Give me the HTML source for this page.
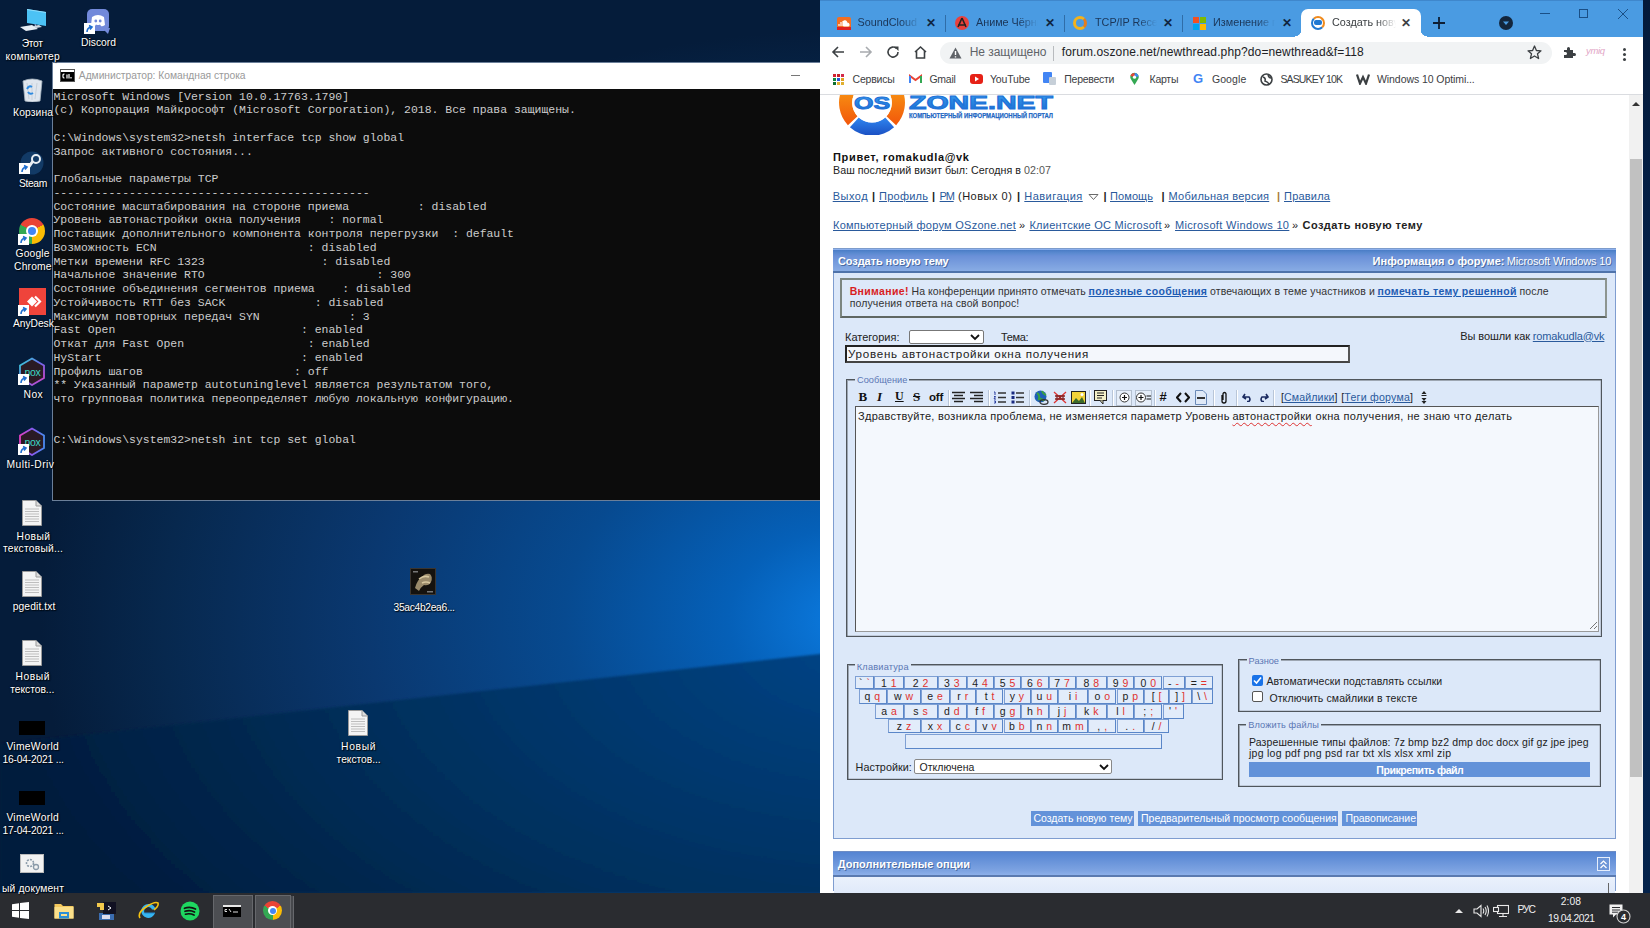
<!DOCTYPE html>
<html><head><meta charset="utf-8">
<style>
*{margin:0;padding:0;box-sizing:border-box}
html,body{width:1650px;height:928px;overflow:hidden;font-family:"Liberation Sans",sans-serif}
body{position:relative;background:#0a2a55}
.abs{position:absolute}
#desk{position:absolute;left:0;top:0;width:1650px;height:893px;overflow:hidden;
background:
 radial-gradient(ellipse 380px 260px at 820px 560px, rgba(40,130,220,.55), rgba(40,130,220,0) 70%),
 radial-gradient(ellipse 700px 420px at 760px 420px, rgba(20,90,170,.5), rgba(20,90,170,0) 75%),
 linear-gradient(180deg,#08244a 0%,#0a2b58 40%,#0a2a55 70%,#07203f 100%);}
#beamlow{position:absolute;left:0;top:0;width:1650px;height:893px;
 background:linear-gradient(174deg, rgba(0,0,0,0) 0%, rgba(0,0,0,0) 76%, rgba(3,20,45,.45) 78%, rgba(3,20,45,.55) 100%);}
.ico{position:absolute;color:#fff;font-size:11px;text-align:center;line-height:13px;text-shadow:0 0 2px #000,1px 1px 1px #000;width:70px}
/* taskbar */
#task{position:absolute;left:0;top:893px;width:1650px;height:35px;background:#2a2c30}
/* cmd */
#cmd{position:absolute;left:52px;top:62px;width:768px;height:439px;background:#0c0c0c;border:1px solid #6b7f99;border-right:none}
#cmdt{position:absolute;left:0;top:0;width:767px;height:26px;background:#fff}
#cmdtxt{position:absolute;left:0.5px;top:26px;font-family:"Liberation Mono",monospace;font-size:11.46px;line-height:13.75px;color:#cccccc;white-space:pre;padding-top:0.5px}
/* chrome */
#chr{position:absolute;left:820px;top:0;width:823px;height:893px;background:#fff;overflow:hidden}
#tabs{position:absolute;left:0;top:0;width:823px;height:37px;background:#4a9be2;border-top:1px solid #3f87cc}
#toolbar{position:absolute;left:0;top:37px;width:823px;height:30px;background:#fff}
#bm{position:absolute;left:0;top:67px;width:823px;height:28px;background:#fff;border-bottom:1px solid #dadce0}
#page{position:absolute;left:0;top:95px;width:809px;height:798px;background:#fff;overflow:hidden;font-family:"Liberation Sans",sans-serif;font-size:11px;color:#000}
#sb{position:absolute;left:809px;top:95px;width:14px;height:798px;background:#f1f1f1}
.tsep{position:absolute;top:14px;width:1px;height:17px;background:#2f6da8}
.ttl{position:absolute;top:15px;font-size:11.5px;line-height:14px;color:#1b3658;white-space:nowrap;width:62px;overflow:hidden;-webkit-mask-image:linear-gradient(90deg,#000 75%,transparent 100%)}
.tx{position:absolute;top:15px;font-size:12px;line-height:14px;color:#0f2540;font-weight:bold}
.bmt{position:absolute;top:5px;font-size:11.3px;line-height:14px;color:#3c4043;white-space:nowrap}
.t{position:absolute;font-size:11px;line-height:13px;white-space:nowrap}
#page a{color:#2a5a9c;text-decoration:underline}
.p{font-weight:normal;color:#222}
.fs{position:absolute;border:1px solid #50565c;box-shadow:inset 1px 1px 0 rgba(80,86,92,.45),inset -1px -1px 0 rgba(80,86,92,.2)}
.lg{position:absolute;background:#dfeafa;padding:0 2px;font-size:9.2px;line-height:12px;color:#6580b8;letter-spacing:0.15px}
.btn{position:absolute;top:715.5px;height:15.5px;background:#6392d9;color:#fff;font-size:10.4px;line-height:15px;text-align:center;white-space:nowrap;letter-spacing:0.1px}
.key{position:absolute;background:#e2ecfa;border:1px solid #5a86c8;border-top-color:#7fa0d4;border-left-color:#7fa0d4;font-size:10.5px;line-height:13px;text-align:center;color:#222;white-space:nowrap;letter-spacing:0.5px}
.dl{position:absolute;width:90px;text-align:center;color:#fff;font-size:10.3px;line-height:13px;text-shadow:0 0 2px rgba(0,0,0,.9),1px 1px 1px rgba(0,0,0,.8);white-space:nowrap}
</style></head>
<body>
<div id="desk"><svg class="abs" style="left:0;top:0" width="1650" height="893">
 <defs>
  <radialGradient id="up" gradientUnits="userSpaceOnUse" cx="860" cy="620" r="820" gradientTransform="translate(860 620) scale(1 0.72) translate(-860 -620)">
   <stop offset="0" stop-color="#1088ec"/><stop offset="0.05" stop-color="#0a74d6"/><stop offset="0.16" stop-color="#0560b8"/><stop offset="0.36" stop-color="#074a90"/><stop offset="0.6" stop-color="#0a3870"/><stop offset="0.85" stop-color="#07284e"/><stop offset="1" stop-color="#051c3a"/>
  </radialGradient>
  <radialGradient id="lo" gradientUnits="userSpaceOnUse" cx="880" cy="640" r="900" gradientTransform="translate(880 640) scale(1 0.55) translate(-880 -640)">
   <stop offset="0" stop-color="#05468a"/><stop offset="0.2" stop-color="#043d78"/><stop offset="0.45" stop-color="#043466"/><stop offset="0.7" stop-color="#042a52"/><stop offset="1" stop-color="#031b3c"/>
  </radialGradient>
  <filter id="bl"><feGaussianBlur stdDeviation="1.2"/></filter>
 </defs>
 <rect width="1650" height="893" fill="url(#up)"/>
 <polygon points="0,744 1650,563 1650,893 0,893" fill="url(#lo)" filter="url(#bl)"/>
</svg><div class="abs" style="left:-8px;top:8px;width:80px;height:30px"><svg style="position:absolute;left:27px;top:0" width="30" height="26"><path d="M8 1 L27 4 V18 L8 15 Z" fill="#4cc2f5"/><path d="M8 1 L27 4 V5 L8 2Z" fill="#8fdcfb"/><path d="M16 16 L17 19 L14 20" stroke="#9ad" fill="none"/><path d="M1 19 L13 17 L19 21 L7 23 Z" fill="#e8eef5"/><path d="M14 18 L20 17 L23 19 L17 20Z" fill="#d0dae4"/></svg></div><div class="abs" style="left:57px;top:8px;width:80px;height:30px"><div style="position:absolute;left:30px;top:1px;width:22px;height:22px;background:#7289da;border-radius:5px"></div><svg style="position:absolute;left:33px;top:6px" width="16" height="14"><path d="M2 3 Q8 -1 14 3 L15 11 Q12 13 11 12 L10 10.5 Q8 11.5 6 10.5 L5 12 Q2 13 1 11 Z" fill="#fff"/><circle cx="5.8" cy="7" r="1.4" fill="#7289da"/><circle cx="10.2" cy="7" r="1.4" fill="#7289da"/></svg><svg style="position:absolute;left:45px;top:20px" width="8" height="6"><path d="M0 0H8L6 6Z" fill="#7289da"/></svg><div style="position:absolute;left:27px;top:15px;width:11px;height:11px"><svg width="11" height="11" style="position:absolute;left:0;bottom:0"><rect x="0" y="0" width="11" height="11" fill="#fff"/><path d="M3 9 Q3 5 7 4 M5 2.5 L8 4 L6 6.5" stroke="#1f6fd0" stroke-width="1.6" fill="none"/></svg></div></div><div class="abs" style="left:-8px;top:78px;width:80px;height:30px"><svg style="position:absolute;left:29px;top:0" width="23" height="24"><path d="M2 3 Q11 -1 21 3 L19 23 Q11 25 4 23 Z" fill="#dfe6ee" stroke="#aab6c2" stroke-width="0.8"/><path d="M6 5 L8 21 M11 5 V22 M16 5 L14 21" stroke="#c0cad4" stroke-width="0.8"/><path d="M6 11 Q8 7 11 9 M12 15 Q9 17 7 14" stroke="#2d8ae0" stroke-width="2" fill="none"/></svg></div><div class="abs" style="left:-8px;top:150px;width:80px;height:30px"><svg style="position:absolute;left:27px;top:1px" width="26" height="24"><circle cx="13" cy="12" r="11.5" fill="#123a66"/><circle cx="17" cy="8" r="4" fill="none" stroke="#e8eef4" stroke-width="2"/><path d="M1 14 L9 17 L14 10" stroke="#e8eef4" stroke-width="3" fill="none"/></svg><div style="position:absolute;left:27px;top:13px;width:11px;height:11px"><svg width="11" height="11" style="position:absolute;left:0;bottom:0"><rect x="0" y="0" width="11" height="11" fill="#fff"/><path d="M3 9 Q3 5 7 4 M5 2.5 L8 4 L6 6.5" stroke="#1f6fd0" stroke-width="1.6" fill="none"/></svg></div></div><div class="abs" style="left:-8px;top:218px;width:80px;height:30px"><div style="position:absolute;left:27px;top:0;width:26px;height:26px;border-radius:50%;background:conic-gradient(from -60deg,#ea4335 0deg 120deg,#fbbc04 120deg 240deg,#34a853 240deg 360deg)"></div><div style="position:absolute;left:34px;top:7px;width:12px;height:12px;border-radius:50%;background:#fff"></div><div style="position:absolute;left:36px;top:9px;width:8px;height:8px;border-radius:50%;background:#4285f4"></div><div style="position:absolute;left:26px;top:16px;width:11px;height:11px"><svg width="11" height="11" style="position:absolute;left:0;bottom:0"><rect x="0" y="0" width="11" height="11" fill="#fff"/><path d="M3 9 Q3 5 7 4 M5 2.5 L8 4 L6 6.5" stroke="#1f6fd0" stroke-width="1.6" fill="none"/></svg></div></div><div class="abs" style="left:-8px;top:288px;width:80px;height:30px"><div style="position:absolute;left:27px;top:0;width:27px;height:27px;background:#ef443b"></div><svg style="position:absolute;left:31px;top:5px" width="20" height="17"><path d="M4 8.5 L9 3.5 L14 8.5 L9 13.5Z" fill="#fff"/><path d="M12 3.5 L17 8.5 L12 13.5" stroke="#fff" stroke-width="2.2" fill="none"/></svg><div style="position:absolute;left:26px;top:17px;width:11px;height:11px"><svg width="11" height="11" style="position:absolute;left:0;bottom:0"><rect x="0" y="0" width="11" height="11" fill="#fff"/><path d="M3 9 Q3 5 7 4 M5 2.5 L8 4 L6 6.5" stroke="#1f6fd0" stroke-width="1.6" fill="none"/></svg></div></div><div class="abs" style="left:-8px;top:357px;width:80px;height:30px"><svg style="position:absolute;left:26px;top:0" width="28" height="29"><defs><linearGradient id="nx1" x1="0" y1="0" x2="1" y2="1"><stop offset="0" stop-color="#30d8d0"/><stop offset="0.5" stop-color="#6a6af0"/><stop offset="1" stop-color="#e040c0"/></linearGradient></defs><path d="M14 1.5 L26 8.5 V21 L14 28 L2 21 V8.5 Z" fill="#2a1a24" stroke="url(#nx1)" stroke-width="1.8"/><text x="14.5" y="18.5" font-family="Liberation Sans" font-size="10.5" fill="#3ad8c4" text-anchor="middle" letter-spacing="-0.3">nox</text></svg><div style="position:absolute;left:26px;top:17px;width:11px;height:11px"><svg width="11" height="11" style="position:absolute;left:0;bottom:0"><rect x="0" y="0" width="11" height="11" fill="#fff"/><path d="M3 9 Q3 5 7 4 M5 2.5 L8 4 L6 6.5" stroke="#1f6fd0" stroke-width="1.6" fill="none"/></svg></div></div><div class="abs" style="left:-8px;top:427px;width:80px;height:30px"><svg style="position:absolute;left:26px;top:0" width="28" height="29"><defs><linearGradient id="nx2" x1="0" y1="0" x2="1" y2="0"><stop offset="0" stop-color="#e040c0"/><stop offset="0.5" stop-color="#8a5af0"/><stop offset="1" stop-color="#4a8af0"/></linearGradient></defs><path d="M14 1.5 L26 8.5 V21 L14 28 L2 21 V8.5 Z" fill="#2a1a24" stroke="url(#nx2)" stroke-width="1.8"/><text x="14.5" y="18.5" font-family="Liberation Sans" font-size="10.5" fill="#3ad8c4" text-anchor="middle" letter-spacing="-0.3">nox</text></svg><div style="position:absolute;left:26px;top:17px;width:11px;height:11px"><svg width="11" height="11" style="position:absolute;left:0;bottom:0"><rect x="0" y="0" width="11" height="11" fill="#fff"/><path d="M3 9 Q3 5 7 4 M5 2.5 L8 4 L6 6.5" stroke="#1f6fd0" stroke-width="1.6" fill="none"/></svg></div></div><div class="abs" style="left:-8px;top:500px;width:80px;height:30px"><div style="position:absolute;left:30px;top:0"><svg width="20" height="26" viewBox="0 0 20 26"><path d="M0.5 0.5H14L19.5 6V25.5H0.5Z" fill="#f4f4f4" stroke="#9a9a9a"/><path d="M14 0.5V6H19.5" fill="#dcdcdc" stroke="#9a9a9a"/><path d="M3 9H17M3 11.5H17M3 14H17M3 16.5H17M3 19H17M3 21.5H17" stroke="#b8b8b8" stroke-width="0.9"/></svg></div></div><div class="abs" style="left:-8px;top:571px;width:80px;height:30px"><div style="position:absolute;left:30px;top:0"><svg width="20" height="26" viewBox="0 0 20 26"><path d="M0.5 0.5H14L19.5 6V25.5H0.5Z" fill="#f4f4f4" stroke="#9a9a9a"/><path d="M14 0.5V6H19.5" fill="#dcdcdc" stroke="#9a9a9a"/><path d="M3 9H17M3 11.5H17M3 14H17M3 16.5H17M3 19H17M3 21.5H17" stroke="#b8b8b8" stroke-width="0.9"/></svg></div></div><div class="abs" style="left:-8px;top:640px;width:80px;height:30px"><div style="position:absolute;left:30px;top:0"><svg width="20" height="26" viewBox="0 0 20 26"><path d="M0.5 0.5H14L19.5 6V25.5H0.5Z" fill="#f4f4f4" stroke="#9a9a9a"/><path d="M14 0.5V6H19.5" fill="#dcdcdc" stroke="#9a9a9a"/><path d="M3 9H17M3 11.5H17M3 14H17M3 16.5H17M3 19H17M3 21.5H17" stroke="#b8b8b8" stroke-width="0.9"/></svg></div></div><div class="abs" style="left:-8px;top:720px;width:80px;height:30px"><div style="position:absolute;left:27px;top:1px;width:26px;height:14px;background:#000"></div></div><div class="abs" style="left:-8px;top:790px;width:80px;height:30px"><div style="position:absolute;left:27px;top:1px;width:26px;height:14px;background:#000"></div></div><div class="abs" style="left:-8px;top:854px;width:80px;height:30px"><div style="position:absolute;left:28px;top:0;width:24px;height:19px;background:#f2f2f2;border:1px solid #bbb"></div><svg style="position:absolute;left:31px;top:3px" width="18" height="14"><circle cx="7" cy="6" r="3.5" fill="none" stroke="#8a9aa8" stroke-width="1.6" stroke-dasharray="2 1.2"/><circle cx="13" cy="10" r="2.5" fill="none" stroke="#8a9aa8" stroke-width="1.3"/></svg></div><div class="abs" style="left:383px;top:568px;width:80px;height:30px"><div style="position:absolute;left:27px;top:0;width:26px;height:27px;background:#15120e;border:1px solid #3a3530"></div><svg style="position:absolute;left:27px;top:0" width="26" height="27"><path d="M5 20 Q7 12 12 9 Q15 5 20 6 Q23 9 21 14 Q19 18 14 17 Q11 19 9 23 Z" fill="#9a8a6a"/><path d="M9 11 Q14 7 19 9 M12 15 Q16 13 20 15" stroke="#d8c8a0" stroke-width="1.6" fill="none"/><rect x="3" y="3" width="5" height="1.5" fill="#777"/><rect x="17" y="23" width="6" height="1.5" fill="#777"/></svg></div><div class="abs" style="left:318px;top:710px;width:80px;height:30px"><div style="position:absolute;left:30px;top:0"><svg width="20" height="26" viewBox="0 0 20 26"><path d="M0.5 0.5H14L19.5 6V25.5H0.5Z" fill="#f4f4f4" stroke="#9a9a9a"/><path d="M14 0.5V6H19.5" fill="#dcdcdc" stroke="#9a9a9a"/><path d="M3 9H17M3 11.5H17M3 14H17M3 16.5H17M3 19H17M3 21.5H17" stroke="#b8b8b8" stroke-width="0.9"/></svg></div></div></div>
<div class="abs" style="left:1643px;top:0;width:7px;height:893px;background:linear-gradient(#041a3a,#05244e 40%,#062a5a 60%,#04224a)"></div>
<div id="cmd">
 <div id="cmdt"><div class="abs" style="left:8px;top:7px;width:13px;height:11px;background:#000;border-top:2px solid #fff;box-shadow:0 0 0 1px #555"><svg width="13" height="9" style="position:absolute;left:0;top:0"><path d="M2 3 Q2 2 3.5 2 M2 3 V5 Q2 6 3.5 6 M6 6.5 V2.5 M8 2 V6.5 M10 5 V6.5" stroke="#fff" stroke-width="1.2" fill="none"/></svg></div><div class="abs" style="left:738px;top:12px;width:9px;height:1px;background:#777"></div></div>
 <div id="cmdtxt">Microsoft Windows [Version 10.0.17763.1790]
(c) Корпорация Майкрософт (Microsoft Corporation), 2018. Все права защищены.

C:\Windows\system32&gt;netsh interface tcp show global
Запрос активного состояния...

Глобальные параметры TCP
----------------------------------------------
Состояние масштабирования на стороне приема          : disabled
Уровень автонастройки окна получения    : normal
Поставщик дополнительного компонента контроля перегрузки  : default
Возможность ECN                      : disabled
Метки времени RFC 1323                 : disabled
Начальное значение RTO                         : 300
Состояние объединения сегментов приема    : disabled
Устойчивость RTT без SACK             : disabled
Максимум повторных передач SYN             : 3
Fast Open                           : enabled
Откат для Fast Open                  : enabled
HyStart                             : enabled
Профиль шагов                      : off
** Указанный параметр autotuninglevel является результатом того,
что групповая политика переопределяет любую локальную конфигурацию.


C:\Windows\system32&gt;netsh int tcp set global</div>
</div>
<div id="chr">
 <div id="tabs">
  <div class="tsep" style="left:125px"></div>
  <div class="tsep" style="left:244px"></div>
  <div class="tsep" style="left:362px"></div>
  <div class="abs" style="left:17px;top:16px;width:14px;height:13px;background:#f26f23;border-radius:2px"><svg width="14" height="13" style="position:absolute;left:0;top:0"><path d="M2 9 L2 7 M4 9 L4 5 M6 9 L6 4 M7 9 L7 4 Q9 3 10 6 Q12 6 12 8 Q12 9 11 9 Z" stroke="#fff" stroke-width="1.2" fill="#fff"/><rect x="0" y="10" width="14" height="3" fill="#e0201f"/></svg></div>
  <div class="tx" style="left:106px">✕</div>
  <div class="abs" style="left:135px;top:15px;width:14px;height:14px;border-radius:50%;background:#e8413d"><svg width="14" height="14" style="position:absolute;left:0;top:0"><path d="M7 2 L11 11 M7 2 L3 11 M3 9 L11 9" stroke="#222" stroke-width="1.6" fill="none"/></svg></div>
  <div class="tx" style="left:225px">✕</div>
  <div class="abs" style="left:253px;top:15px;width:14px;height:14px;border-radius:50%;border:3px solid #f3b21c;border-right-color:#e57d1c"></div>
  <div class="tx" style="left:343px">✕</div>
  <div class="abs" style="left:373px;top:16px;width:6px;height:6px;background:#f25022"></div>
  <div class="abs" style="left:380px;top:16px;width:6px;height:6px;background:#7fba00"></div>
  <div class="abs" style="left:373px;top:23px;width:6px;height:6px;background:#00a4ef"></div>
  <div class="abs" style="left:380px;top:23px;width:6px;height:6px;background:#ffb900"></div>
  <div class="tx" style="left:462px">✕</div>
  <div class="abs" style="left:481px;top:8px;width:120px;height:29px;background:#fff;border-radius:7px 7px 0 0"></div>
  <div class="abs" style="left:475px;top:29px;width:6px;height:8px;background:radial-gradient(circle at 0 0,#4a9be2 6px,#fff 6.5px)"></div>
  <div class="abs" style="left:601px;top:29px;width:6px;height:8px;background:radial-gradient(circle at 100% 0,#4a9be2 6px,#fff 6.5px)"></div>
  <div class="abs" style="left:491px;top:15px;width:14px;height:14px;border-radius:50%;border:2.5px solid #f08a1c;border-bottom-color:#1e78d2;border-left-color:#1e78d2;background:#fff"></div>
  <div class="abs" style="left:494px;top:19px;width:8px;height:5px;border-radius:2px;background:#1e78d2"></div>
  <div class="tx" style="left:581px;color:#3c4043">✕</div>
  <svg class="abs" style="left:612px;top:15px" width="14" height="14"><path d="M7 1 V13 M1 7 H13" stroke="#0e1e33" stroke-width="1.8"/></svg>
  <div class="abs" style="left:679px;top:15px;width:14px;height:14px;border-radius:50%;background:#13263d"><svg width="14" height="14" style="position:absolute;left:0;top:0"><path d="M4 5.5 L7 9 L10 5.5 Z" fill="#4a9be2"/></svg></div>
  <div class="abs" style="left:720px;top:12px;width:10px;height:1px;background:#1a4f86"></div>
  <div class="abs" style="left:759px;top:8px;width:9px;height:9px;border:1px solid #1a4f86"></div>
  <svg class="abs" style="left:797px;top:7px" width="12" height="12"><path d="M1 1 L11 11 M11 1 L1 11" stroke="#1a4f86" stroke-width="1"/></svg>
 </div>
 <div id="toolbar">
  <svg class="abs" style="left:11px;top:8px" width="14" height="14"><path d="M13 7 H2 M7 2 L2 7 L7 12" stroke="#3c4043" stroke-width="1.6" fill="none"/></svg>
  <svg class="abs" style="left:39px;top:8px" width="14" height="14"><path d="M1 7 H12 M7 2 L12 7 L7 12" stroke="#a8abaf" stroke-width="1.6" fill="none"/></svg>
  <svg class="abs" style="left:66px;top:8px" width="14" height="14"><path d="M12 7 A5 5 0 1 1 10.5 3.5" stroke="#3c4043" stroke-width="1.6" fill="none"/><path d="M8 1.5 L12.5 1.5 L12.5 6 Z" fill="#3c4043"/></svg>
  <svg class="abs" style="left:93px;top:8px" width="15" height="14"><path d="M2 7 L7.5 2 L13 7 M3.5 6 V13 H11.5 V6" stroke="#3c4043" stroke-width="1.6" fill="none"/></svg>
  <div class="abs" style="left:120px;top:5px;width:612px;height:22px;border-radius:11px;background:#f1f3f4"></div>
  <svg class="abs" style="left:129px;top:10px" width="13" height="12"><path d="M6.5 0.5 L12.5 11.5 H0.5 Z" fill="#5f6368"/><path d="M6.5 4 V8 M6.5 9.2 V10.4" stroke="#fff" stroke-width="1.4"/></svg>
  
  <div class="abs" style="left:233px;top:9px;width:1px;height:15px;background:#b8bbbe"></div>
  
  <svg class="abs" style="left:707px;top:8px" width="15" height="15"><path d="M7.5 1 L9.4 5.5 L14 5.8 L10.5 8.8 L11.6 13.5 L7.5 11 L3.4 13.5 L4.5 8.8 L1 5.8 L5.6 5.5 Z" stroke="#3c4043" stroke-width="1.3" fill="none" stroke-linejoin="round"/></svg>
  <svg class="abs" style="left:742px;top:8px" width="14" height="14"><path d="M2 5 H5 V3.5 A1.5 1.5 0 0 1 8 3.5 V5 H11 V8 H12.5 A1.5 1.5 0 0 1 12.5 11 H11 V13 H2 V10 H3.5 A1.5 1.5 0 0 0 3.5 7 H2 Z" fill="#3c4043"/></svg>
  <div class="abs" style="left:766px;top:8px;font:italic 9.5px/12px 'Liberation Sans',sans-serif;color:#e2a6c6;letter-spacing:-0.3px">ymiq</div>
  <div class="abs" style="left:803px;top:11px;width:3px;height:3px;border-radius:50%;background:#3c4043;box-shadow:0 5px 0 #3c4043,0 10px 0 #3c4043"></div>
 </div>
 <div id="bm">
  <div class="abs" style="left:13px;top:6.5px;width:3px;height:3px;background:#d3232f"></div><div class="abs" style="left:17px;top:6.5px;width:3px;height:3px;background:#c8202a"></div><div class="abs" style="left:21px;top:6.5px;width:3px;height:3px;background:#d32a4a"></div><div class="abs" style="left:13px;top:10.5px;width:3px;height:3px;background:#0f8a3c"></div><div class="abs" style="left:17px;top:10.5px;width:3px;height:3px;background:#2456d6"></div><div class="abs" style="left:21px;top:10.5px;width:3px;height:3px;background:#e0a020"></div><div class="abs" style="left:13px;top:14.5px;width:3px;height:3px;background:#0d6e30"></div><div class="abs" style="left:17px;top:14.5px;width:3px;height:3px;background:#e0b030"></div><div class="abs" style="left:21px;top:14.5px;width:3px;height:3px;background:#e0b030"></div>
  
  <svg class="abs" style="left:89px;top:7px" width="13" height="10"><path d="M1 9 V2 L6.5 6 L12 2 V9" stroke="#ea4335" stroke-width="2" fill="none"/><path d="M1 9 V2" stroke="#4285f4" stroke-width="2"/><path d="M12 9 V2" stroke="#34a853" stroke-width="2"/></svg>
  
  <div class="abs" style="left:150px;top:7px;width:13px;height:10px;background:#e62117;border-radius:3px"><svg width="13" height="10" style="position:absolute;left:0;top:0"><path d="M5 2.5 L9 5 L5 7.5 Z" fill="#fff"/></svg></div>
  
  <div class="abs" style="left:223px;top:5px;width:9px;height:11px;background:#4285f4;border-radius:1px"></div>
  <div class="abs" style="left:229px;top:10px;width:7px;height:8px;background:#c6cfd8;border-radius:1px"></div>
  
  <svg class="abs" style="left:309px;top:5px" width="11" height="14"><path d="M5.5 13 L1.8 7 A4.2 4.2 0 1 1 9.2 7 Z" fill="#34a853"/><path d="M5.5 1 A4.2 4.2 0 0 1 9.5 4.5 L5.5 5 Z" fill="#4285f4"/><path d="M1.5 4 A4.2 4.2 0 0 1 5.5 1 L5.5 5 Z" fill="#ea4335"/><circle cx="5.5" cy="5.2" r="1.6" fill="#fff"/></svg>
  
  <div class="abs" style="left:373px;top:5px;font-size:13px;font-weight:bold;color:#4285f4;line-height:14px">G</div>
  
  <svg class="abs" style="left:440px;top:6px" width="13" height="13"><circle cx="6.5" cy="6.5" r="5.5" fill="none" stroke="#3c4043" stroke-width="1.6"/><path d="M3 4 Q6 5 5 8 Q8 9 9 11 M8 2 Q9 5 11 5" stroke="#3c4043" stroke-width="1.5" fill="none"/></svg>
  
  <svg class="abs" style="left:536px;top:6px" width="14" height="12"><path d="M1 1.5 L4 10.5 L7 4 L10 10.5 L13 1.5" stroke="#3c4043" stroke-width="2.2" fill="none"/></svg>
  
 </div>
 <div id="page">
  <!-- logo -->
  <svg class="abs" style="left:12px;top:-5px" width="250" height="45">
   <defs>
    <linearGradient id="og" x1="0" y1="0" x2="0" y2="1"><stop offset="0" stop-color="#f9a814"/><stop offset="0.45" stop-color="#f78a12"/><stop offset="1" stop-color="#f2560a"/></linearGradient>
    <linearGradient id="bg" x1="0" y1="0" x2="0" y2="1"><stop offset="0" stop-color="#2f86f0"/><stop offset="1" stop-color="#1a4fc2"/></linearGradient>
    <linearGradient id="tg" x1="0" y1="0" x2="0" y2="1"><stop offset="0" stop-color="#3aa0f0"/><stop offset="1" stop-color="#1a6ad0"/></linearGradient>
   </defs>
   <path d="M15.9 35.2 A33 33 0 0 1 40 -20.3 L40 -7.1 A19.8 19.8 0 0 0 25.5 26.2 Z" fill="url(#og)"/>
   <path d="M64.1 35.2 A33 33 0 0 0 40 -20.3 L40 -7.1 A19.8 19.8 0 0 1 54.5 26.2 Z" fill="url(#og)"/>
   <path d="M17.9 37.2 A33 33 0 0 0 62.1 37.2 L53.2 27.4 A19.8 19.8 0 0 1 26.8 27.4 Z" fill="url(#bg)"/>
   <circle cx="40" cy="12.7" r="19.8" fill="#fff"/>
   <text x="22" y="18.5" font-family="Liberation Sans" font-weight="bold" font-size="17" textLength="36" lengthAdjust="spacingAndGlyphs" fill="url(#tg)" stroke="#1e6fd6" stroke-width="0.9">OS</text>
   <text x="77" y="18.7" font-family="Liberation Sans" font-weight="bold" font-size="19" textLength="144" lengthAdjust="spacingAndGlyphs" fill="url(#tg)" stroke="#1e72d8" stroke-width="1">ZONE.NET</text>
   <text x="77" y="28.2" font-family="Liberation Sans" font-weight="bold" font-size="6.8" textLength="144" lengthAdjust="spacingAndGlyphs" fill="#2468c4" stroke="#2468c4" stroke-width="0.25">КОМПЬЮТЕРНЫЙ ИНФОРМАЦИОННЫЙ ПОРТАЛ</text>
  </svg>
  <!-- greeting -->
  <!-- nav -->
  <!-- breadcrumb -->
  <!-- table -->
  <div class="abs" style="left:13px;top:153px;width:783px;height:591px;background:#dce8f9;border:1px solid #7f9dd0"></div>
  <div class="abs" style="left:13px;top:153px;width:783px;height:25px;background:linear-gradient(#7d9ccc 0,#7d9ccc 1px,#8cb0ee 1px,#8cb0ee 2px,#4a7cc6 2px,#5a8ad0 5px,#6a90d8 8px,#88acE4 23px,#4f73aa 23px,#4f73aa 24px)"></div>
  <!-- alert -->
  <div class="abs" style="left:20px;top:183px;width:767px;height:40px;border:2px solid #7c8680;border-right-color:#8d9590;border-bottom-color:#5f6763;background:#dde9f9"></div>
  <!-- category row -->
  <div class="abs" style="left:89px;top:235px;width:75px;height:14px;background:#fff;border:1px solid #777;border-radius:2px"><svg width="10" height="7" style="position:absolute;left:60px;top:3px"><path d="M1 1 L5 5 L9 1" stroke="#111" stroke-width="1.8" fill="none"/></svg></div>
  <div class="abs" style="left:25px;top:250px;width:505px;height:18px;background:#f4f7fc;border:2px solid #222;border-right-color:#555;border-bottom-color:#444"></div>
  <!-- message fieldset -->
  <div class="fs" style="left:26px;top:284px;width:756px;height:258px"></div>
  <div id="tb" class="abs" style="left:35px;top:292px;width:600px;height:18px"><div class="abs" style="left:3.5px;top:3px;font-family:'Liberation Serif',serif;font-weight:bold;font-size:13px;line-height:14px;color:#111">B</div><div class="abs" style="left:22px;top:3px;font-family:'Liberation Serif',serif;font-weight:bold;font-style:italic;font-size:13px;line-height:14px;color:#111">I</div><div class="abs" style="left:40px;top:3px;font-family:'Liberation Serif',serif;font-weight:bold;font-size:12px;line-height:13px;color:#111;text-decoration:underline">U</div><div class="abs" style="left:58px;top:3px;font-family:'Liberation Serif',serif;font-weight:bold;font-size:13px;line-height:14px;color:#111;text-decoration:line-through">S</div><div class="abs" style="left:74px;top:4px;font-weight:bold;font-size:11.5px;line-height:13px;color:#111;letter-spacing:-0.2px">off</div><div class="abs" style="left:92.5px;top:3px;width:1px;height:16px;background:#b9c6d8;box-shadow:1px 0 0 #fff"></div><svg class="abs" style="left:97px;top:4px" width="13" height="12"><path d="M0 1.5H13M2 4.5H11M0 7.5H13M2 10.5H11" stroke="#222" stroke-width="1.6"/></svg><svg class="abs" style="left:115px;top:4px" width="13" height="12"><path d="M0 1.5H13M4 4.5H13M0 7.5H13M4 10.5H13" stroke="#222" stroke-width="1.6"/></svg><div class="abs" style="left:133px;top:3px;width:1px;height:16px;background:#b9c6d8;box-shadow:1px 0 0 #fff"></div><svg class="abs" style="left:138px;top:4px" width="13" height="13"><path d="M5 2H13M5 6.5H13M5 11H13" stroke="#333" stroke-width="1.4"/><path d="M1 1L2 1V4M1 5.5H2.5L1 8H3M1 10H2.5V12H1" stroke="#2a3fa0" stroke-width="1" fill="none"/></svg><svg class="abs" style="left:156px;top:4px" width="13" height="13"><path d="M5 2H13M5 6.5H13M5 11H13" stroke="#333" stroke-width="1.4"/><rect x="0.5" y="0.5" width="3" height="3" fill="#1a2a80"/><rect x="0.5" y="5" width="3" height="3" fill="#1a2a80"/><rect x="0.5" y="9.5" width="3" height="3" fill="#1a2a80"/></svg><div class="abs" style="left:174px;top:3px;width:1px;height:16px;background:#b9c6d8;box-shadow:1px 0 0 #fff"></div><svg class="abs" style="left:179px;top:3px" width="15" height="15"><circle cx="6.5" cy="6.5" r="6" fill="#1f5fb8"/><path d="M3 3Q6 5 5 9Q8 8 10 11M8 1Q9 4 12 5" stroke="#3aa040" stroke-width="2" fill="none"/><ellipse cx="10" cy="12" rx="4" ry="2.3" fill="none" stroke="#333" stroke-width="1.3"/></svg><svg class="abs" style="left:198px;top:4px" width="14" height="13"><path d="M1 1L13 12M13 1L1 12" stroke="#d33" stroke-width="1.3"/><path d="M2 5H12M2 8H12M4 4V9M7 4V9M10 4V9" stroke="#822" stroke-width="1.3"/></svg><svg class="abs" style="left:216px;top:4px" width="15" height="13"><rect x="0.5" y="0.5" width="14" height="12" fill="#f2d23a" stroke="#222"/><path d="M1 12L5 7L8 10L11 6L14 12Z" fill="#3b6a2a"/><circle cx="11" cy="3.5" r="1.5" fill="#fff"/></svg><div class="abs" style="left:234px;top:3px;width:1px;height:16px;background:#b9c6d8;box-shadow:1px 0 0 #fff"></div><svg class="abs" style="left:239px;top:3px" width="13" height="15"><rect x="0.5" y="0.5" width="12" height="10" fill="#f3f0c8" stroke="#222"/><path d="M3 3H10M3 5.5H10M3 8H8" stroke="#222" stroke-width="1.2"/><path d="M6 10.5L9 14V10.5" fill="#f3f0c8" stroke="#222"/></svg><div class="abs" style="left:257px;top:3px;width:1px;height:16px;background:#b9c6d8;box-shadow:1px 0 0 #fff"></div><div class="abs" style="left:261px;top:3px;width:16px;height:16px;border:1px solid #b4c0d0;background:#e6eef9"></div><svg class="abs" style="left:264px;top:5px" width="11" height="11"><circle cx="5.5" cy="5.5" r="4.5" fill="#fff" stroke="#333"/><path d="M3 5.5H8M5.5 3V8" stroke="#111" stroke-width="1.2"/></svg><div class="abs" style="left:279.5px;top:3px;width:17px;height:16px;border:1px solid #b4c0d0;background:#e6eef9"></div><svg class="abs" style="left:281px;top:5px" width="16" height="11"><circle cx="5" cy="5.5" r="4.5" fill="#fff" stroke="#333"/><path d="M2.5 5.5H7.5M5 3V8M10.5 4H15M10.5 7H15" stroke="#111" stroke-width="1.2"/></svg><div class="abs" style="left:299px;top:3px;width:1px;height:16px;background:#b9c6d8;box-shadow:1px 0 0 #fff"></div><div class="abs" style="left:304.5px;top:3px;font-weight:bold;font-size:13px;line-height:14px;color:#111">#</div><svg class="abs" style="left:321px;top:5px" width="14" height="11"><path d="M5 1L1 5.5L5 10M9 1L13 5.5L9 10" stroke="#111" stroke-width="2" fill="none"/></svg><svg class="abs" style="left:340px;top:3px" width="12" height="15"><path d="M0.5 0.5H8L11.5 4V14.5H0.5Z" fill="#dfe9f7" stroke="#6a8ab8"/><path d="M2 8H10" stroke="#333" stroke-width="2"/></svg><div class="abs" style="left:358px;top:3px;width:1px;height:16px;background:#b9c6d8;box-shadow:1px 0 0 #fff"></div><svg class="abs" style="left:365px;top:4px" width="8" height="13"><path d="M2 4V10A2 2 0 0 0 6 10V3A1.5 1.5 0 0 0 3 3V9" stroke="#111" stroke-width="1.3" fill="none"/></svg><div class="abs" style="left:381px;top:3px;width:1px;height:16px;background:#b9c6d8;box-shadow:1px 0 0 #fff"></div><svg class="abs" style="left:387px;top:6px" width="12" height="9"><path d="M3 1L1 4L4 6M1.5 4H7A3.5 3.5 0 0 1 7 8.5H5" stroke="#1a2a60" stroke-width="1.6" fill="none"/></svg><svg class="abs" style="left:402px;top:6px" width="12" height="9"><path d="M9 1L11 4L8 6M10.5 4H5A3.5 3.5 0 0 0 5 8.5H7" stroke="#1a2a60" stroke-width="1.6" fill="none"/></svg><div class="abs" style="left:418px;top:3px;width:1px;height:16px;background:#b9c6d8;box-shadow:1px 0 0 #fff"></div><svg class="abs" style="left:565px;top:2px" width="8" height="16"><path d="M4 2L1.5 5H6.5Z M4 15L1.5 12H6.5Z M4 12L1.5 9H6.5Z" fill="#222"/><path d="M1.5 6.5H6.5" stroke="#222" stroke-width="1"/></svg></div>
  <div class="abs" style="left:35px;top:311px;width:744px;height:226px;background:#f4f8fd;border:1px solid #666;border-right-color:#999;border-bottom-color:#999;border-left-color:#555;border-top-color:#555"></div>
  <svg class="abs" style="left:769px;top:526px" width="9" height="9"><path d="M8 1 L1 8 M8 5 L5 8" stroke="#777" stroke-width="1"/></svg>
  <!-- keyboard fieldset -->
  <div class="fs" style="left:27px;top:569px;width:376px;height:116px"></div>
  <div id="kb"><div class="key" style="left:35.3px;top:580.5px;width:18.9px;height:13.5px"><span>`</span> <span style="color:#e0322f">`</span></div><div class="key" style="left:54.2px;top:580.5px;width:29.8px;height:13.5px"><span>1</span> <span style="color:#e0322f">1</span></div><div class="key" style="left:84.0px;top:580.5px;width:33.6px;height:13.5px"><span>2</span> <span style="color:#e0322f">2</span></div><div class="key" style="left:117.6px;top:580.5px;width:29.1px;height:13.5px"><span>3</span> <span style="color:#e0322f">3</span></div><div class="key" style="left:146.7px;top:580.5px;width:27.3px;height:13.5px"><span>4</span> <span style="color:#e0322f">4</span></div><div class="key" style="left:174.0px;top:580.5px;width:27.4px;height:13.5px"><span>5</span> <span style="color:#e0322f">5</span></div><div class="key" style="left:201.4px;top:580.5px;width:27.3px;height:13.5px"><span>6</span> <span style="color:#e0322f">6</span></div><div class="key" style="left:228.7px;top:580.5px;width:27.3px;height:13.5px"><span>7</span> <span style="color:#e0322f">7</span></div><div class="key" style="left:256.0px;top:580.5px;width:31.0px;height:13.5px"><span>8</span> <span style="color:#e0322f">8</span></div><div class="key" style="left:287.0px;top:580.5px;width:27.4px;height:13.5px"><span>9</span> <span style="color:#e0322f">9</span></div><div class="key" style="left:314.4px;top:580.5px;width:28.1px;height:13.5px"><span>0</span> <span style="color:#e0322f">0</span></div><div class="key" style="left:342.5px;top:580.5px;width:22.4px;height:13.5px"><span>-</span> <span style="color:#e0322f">-</span></div><div class="key" style="left:364.9px;top:580.5px;width:28.3px;height:13.5px"><span>=</span> <span style="color:#e0322f">=</span></div><div class="key" style="left:38.6px;top:594.0px;width:28.1px;height:15.0px"><span>q</span> <span style="color:#e0322f">q</span></div><div class="key" style="left:66.7px;top:594.0px;width:34.0px;height:15.0px"><span>w</span> <span style="color:#e0322f">w</span></div><div class="key" style="left:100.7px;top:594.0px;width:29.1px;height:15.0px"><span>e</span> <span style="color:#e0322f">e</span></div><div class="key" style="left:129.8px;top:594.0px;width:26.3px;height:15.0px"><span>r</span> <span style="color:#e0322f">r</span></div><div class="key" style="left:156.1px;top:594.0px;width:27.4px;height:15.0px"><span>t</span> <span style="color:#e0322f">t</span></div><div class="key" style="left:183.5px;top:594.0px;width:27.3px;height:15.0px"><span>y</span> <span style="color:#e0322f">y</span></div><div class="key" style="left:210.8px;top:594.0px;width:27.3px;height:15.0px"><span>u</span> <span style="color:#e0322f">u</span></div><div class="key" style="left:238.1px;top:594.0px;width:30.3px;height:15.0px"><span>i</span> <span style="color:#e0322f">i</span></div><div class="key" style="left:268.4px;top:594.0px;width:28.1px;height:15.0px"><span>o</span> <span style="color:#e0322f">o</span></div><div class="key" style="left:296.5px;top:594.0px;width:27.9px;height:15.0px"><span>p</span> <span style="color:#e0322f">p</span></div><div class="key" style="left:324.4px;top:594.0px;width:24.8px;height:15.0px"><span>[</span> <span style="color:#e0322f">[</span></div><div class="key" style="left:349.2px;top:594.0px;width:22.4px;height:15.0px"><span>]</span> <span style="color:#e0322f">]</span></div><div class="key" style="left:371.6px;top:594.0px;width:21.6px;height:15.0px"><span>\</span> <span style="color:#e0322f">\</span></div><div class="key" style="left:54.7px;top:609.0px;width:29.3px;height:14.6px"><span>a</span> <span style="color:#e0322f">a</span></div><div class="key" style="left:84.0px;top:609.0px;width:33.6px;height:14.6px"><span>s</span> <span style="color:#e0322f">s</span></div><div class="key" style="left:117.6px;top:609.0px;width:29.1px;height:14.6px"><span>d</span> <span style="color:#e0322f">d</span></div><div class="key" style="left:146.7px;top:609.0px;width:27.3px;height:14.6px"><span>f</span> <span style="color:#e0322f">f</span></div><div class="key" style="left:174.0px;top:609.0px;width:27.4px;height:14.6px"><span>g</span> <span style="color:#e0322f">g</span></div><div class="key" style="left:201.4px;top:609.0px;width:27.3px;height:14.6px"><span>h</span> <span style="color:#e0322f">h</span></div><div class="key" style="left:228.7px;top:609.0px;width:27.3px;height:14.6px"><span>j</span> <span style="color:#e0322f">j</span></div><div class="key" style="left:256.0px;top:609.0px;width:31.0px;height:14.6px"><span>k</span> <span style="color:#e0322f">k</span></div><div class="key" style="left:287.0px;top:609.0px;width:27.4px;height:14.6px"><span>l</span> <span style="color:#e0322f">l</span></div><div class="key" style="left:314.4px;top:609.0px;width:28.1px;height:14.6px"><span>;</span> <span style="color:#e0322f">;</span></div><div class="key" style="left:342.5px;top:609.0px;width:21.6px;height:14.6px"><span>'</span> <span style="color:#e0322f">'</span></div><div class="key" style="left:67.7px;top:623.6px;width:33.0px;height:14.9px"><span>z</span> <span style="color:#e0322f">z</span></div><div class="key" style="left:100.7px;top:623.6px;width:29.1px;height:14.9px"><span>x</span> <span style="color:#e0322f">x</span></div><div class="key" style="left:129.8px;top:623.6px;width:26.3px;height:14.9px"><span>c</span> <span style="color:#e0322f">c</span></div><div class="key" style="left:156.1px;top:623.6px;width:27.4px;height:14.9px"><span>v</span> <span style="color:#e0322f">v</span></div><div class="key" style="left:183.5px;top:623.6px;width:27.3px;height:14.9px"><span>b</span> <span style="color:#e0322f">b</span></div><div class="key" style="left:210.8px;top:623.6px;width:27.3px;height:14.9px"><span>n</span> <span style="color:#e0322f">n</span></div><div class="key" style="left:238.1px;top:623.6px;width:30.3px;height:14.9px"><span>m</span> <span style="color:#e0322f">m</span></div><div class="key" style="left:268.4px;top:623.6px;width:28.1px;height:14.9px"><span>,</span> <span style="color:#e0322f">,</span></div><div class="key" style="left:296.5px;top:623.6px;width:27.9px;height:14.9px"><span>.</span> <span style="color:#e0322f">.</span></div><div class="key" style="left:324.4px;top:623.6px;width:24.8px;height:14.9px"><span>/</span> <span style="color:#e0322f">/</span></div><div class="key" style="left:84.5px;top:638.5px;width:257.3px;height:15px"></div></div>
  <div class="abs" style="left:94px;top:664px;width:198px;height:15px;background:#fff;border:1px solid #888;border-radius:2px"><svg width="10" height="7" style="position:absolute;left:184px;top:4px"><path d="M1 1 L5 5 L9 1" stroke="#111" stroke-width="1.8" fill="none"/></svg></div>
  <!-- misc fieldset -->
  <div class="fs" style="left:418px;top:564px;width:363px;height:53px"></div>
  <div class="abs" style="left:432px;top:580px;width:11px;height:11px;background:#1a73e8;border-radius:2px"><svg width="11" height="11" style="position:absolute;left:0;top:0"><path d="M2 5.5 L4.5 8 L9 2.5" stroke="#fff" stroke-width="1.6" fill="none"/></svg></div>
  <div class="abs" style="left:432px;top:596px;width:11px;height:11px;background:#fff;border:1px solid #555;border-radius:2px"></div>
  <!-- attach fieldset -->
  <div class="fs" style="left:418px;top:629px;width:363px;height:63px"></div>
  <div class="abs" style="left:429px;top:667px;width:341px;height:15px;background:#6392d9"></div>
  <!-- buttons -->
  <div class="btn" style="left:211px;width:103px"></div>
  <div class="btn" style="left:318px;width:200px"></div>
  <div class="btn" style="left:522px;width:75px"></div>
  <!-- additional options -->
  <div class="abs" style="left:13px;top:756px;width:783px;height:40px;background:#dce8f9;border:1px solid #7f9dd0"></div>
  <div class="abs" style="left:13px;top:756px;width:783px;height:26px;background:linear-gradient(#6d8cc4 0,#6d8cc4 1px,#5584d2 1px,#5f8cd6 6px,#7ea4e2 20px,#8cb0ea 24px,#5a7ab0 24px,#5a7ab0 26px)"></div>
  <div class="abs" style="left:777px;top:762px;width:13px;height:14px;border:1px solid #e6eefc;background:#6d96d8"><svg width="11" height="12" style="position:absolute;left:0;top:0"><path d="M2.5 6 L5.5 3 L8.5 6 M2.5 10 L5.5 7 L8.5 10" stroke="#fff" stroke-width="1.2" fill="none"/></svg></div>
  <div class="abs" style="left:14px;top:782px;width:781px;height:20px;background:linear-gradient(#eaf1fc,#dde8f9)"></div><div class="abs" style="left:788px;top:788px;width:1px;height:12px;background:#666"></div>
 <!--gen-->
<div class="t" style="left:13.0px;top:55.7px;font-size:11px;line-height:13px;letter-spacing:0.671px;font-weight:bold;color:#111;">Привет, romakudla@vk</div>
<div class="t" style="left:13.0px;top:68.5px;font-size:10.7px;line-height:13px;letter-spacing:0.042px;color:#222;">Ваш последний визит был: Сегодня в <span style="color:#555">02:07</span></div>
<div class="t" style="left:12.7px;top:94.7px;font-size:11px;line-height:13px;letter-spacing:0.495px;;"><a>Выход</a></div>
<div class="t" style="left:52.0px;top:94.7px;font-size:11px;line-height:13px;letter-spacing:0.000px;color:#222;font-weight:bold;">|</div>
<div class="t" style="left:59.0px;top:94.7px;font-size:11px;line-height:13px;letter-spacing:0.250px;;"><a>Профиль</a></div>
<div class="t" style="left:112.0px;top:94.7px;font-size:11px;line-height:13px;letter-spacing:0.000px;color:#222;font-weight:bold;">|</div>
<div class="t" style="left:119.6px;top:94.7px;font-size:11px;line-height:13px;letter-spacing:-1.200px;;"><a>PM</a></div>
<div class="t" style="left:138.0px;top:94.7px;font-size:11px;line-height:13px;letter-spacing:0.498px;color:#222;">(Новых 0)</div>
<div class="t" style="left:197.0px;top:94.7px;font-size:11px;line-height:13px;letter-spacing:0.000px;color:#222;font-weight:bold;">|</div>
<div class="t" style="left:204.3px;top:94.7px;font-size:11px;line-height:13px;letter-spacing:0.457px;;"><a>Навигация</a></div>
<div class="t" style="left:283.5px;top:94.7px;font-size:11px;line-height:13px;letter-spacing:0.000px;color:#222;font-weight:bold;">|</div>
<div class="t" style="left:290.0px;top:94.7px;font-size:11px;line-height:13px;letter-spacing:0.100px;;"><a>Помощь</a></div>
<div class="t" style="left:341.5px;top:94.7px;font-size:11px;line-height:13px;letter-spacing:0.000px;color:#222;font-weight:bold;">|</div>
<div class="t" style="left:348.6px;top:94.7px;font-size:11px;line-height:13px;letter-spacing:0.242px;;"><a>Мобильная версия</a></div>
<div class="t" style="left:457.0px;top:94.7px;font-size:11px;line-height:13px;letter-spacing:0.000px;color:#a87a3a;font-weight:bold;">|</div>
<div class="t" style="left:464.0px;top:94.7px;font-size:11px;line-height:13px;letter-spacing:0.221px;;"><a>Правила</a></div>
<div class="t" style="left:13.0px;top:124.3px;font-size:11px;line-height:13px;letter-spacing:0.262px;;"><a>Компьютерный форум OSzone.net</a></div>
<div class="t" style="left:199.0px;top:124.3px;font-size:11px;line-height:13px;letter-spacing:0.000px;color:#222;">»</div>
<div class="t" style="left:209.4px;top:124.3px;font-size:11px;line-height:13px;letter-spacing:0.282px;;"><a>Клиентские ОС Microsoft</a></div>
<div class="t" style="left:344.0px;top:124.3px;font-size:11px;line-height:13px;letter-spacing:0.000px;color:#222;">»</div>
<div class="t" style="left:355.0px;top:124.3px;font-size:11px;line-height:13px;letter-spacing:0.337px;;"><a>Microsoft Windows 10</a></div>
<div class="t" style="left:472.0px;top:124.3px;font-size:11px;line-height:13px;letter-spacing:0.000px;color:#222;">»</div>
<div class="t" style="left:482.5px;top:124.3px;font-size:11px;line-height:13px;letter-spacing:0.448px;font-weight:bold;color:#222;">Создать новую тему</div>
<div class="t" style="left:18.0px;top:159.9px;font-size:11px;line-height:13px;letter-spacing:-0.087px;font-weight:bold;color:#fff;text-shadow:1px 1px 0 #4a6aa0;">Создать новую тему</div>
<div class="t" style="left:552.5px;top:159.9px;font-size:11px;line-height:13px;letter-spacing:0.059px;font-weight:bold;color:#fff;text-shadow:1px 1px 0 #4a6aa0;">Информация о форуме:</div>
<div class="t" style="left:686.8px;top:159.9px;font-size:11px;line-height:13px;letter-spacing:-0.158px;color:#fff;text-shadow:1px 1px 0 #4a6aa0;">Microsoft Windows 10</div>
<div class="t" style="left:29.7px;top:190.4px;font-size:10.5px;line-height:13px;letter-spacing:0.339px;font-weight:bold;color:#d81e1e;">Внимание!</div>
<div class="t" style="left:91.5px;top:190.4px;font-size:10.5px;line-height:13px;letter-spacing:0.072px;color:#333;">На конференции принято отмечать</div>
<div class="t" style="left:268.5px;top:190.4px;font-size:10.5px;line-height:13px;letter-spacing:0.327px;font-weight:bold;"><a style="color:#1e5cb3">полезные сообщения</a></div>
<div class="t" style="left:390.0px;top:190.4px;font-size:10.5px;line-height:13px;letter-spacing:0.116px;color:#333;">отвечающих в теме участников и</div>
<div class="t" style="left:557.6px;top:190.4px;font-size:10.5px;line-height:13px;letter-spacing:0.326px;font-weight:bold;"><a style="color:#1e5cb3">помечать тему решенной</a></div>
<div class="t" style="left:699.6px;top:190.4px;font-size:10.5px;line-height:13px;letter-spacing:0.062px;color:#333;">после</div>
<div class="t" style="left:29.7px;top:202.1px;font-size:10.5px;line-height:13px;letter-spacing:0.119px;color:#333;">получения ответа на свой вопрос!</div>
<div class="t" style="left:25.0px;top:235.9px;font-size:11px;line-height:13px;letter-spacing:0.002px;color:#222;">Категория:</div>
<div class="t" style="left:181.0px;top:235.9px;font-size:11px;line-height:13px;letter-spacing:-0.367px;color:#222;">Тема:</div>
<div class="t" style="left:640.3px;top:234.5px;font-size:11px;line-height:13px;letter-spacing:-0.080px;color:#222;">Вы вошли как</div>
<div class="t" style="left:712.8px;top:234.5px;font-size:11px;line-height:13px;letter-spacing:-0.166px;;"><a>romakudla@vk</a></div>
<div class="t" style="left:28.0px;top:252.2px;font-size:11.6px;line-height:14px;letter-spacing:0.745px;color:#222;">Уровень автонастройки окна получения</div>
<div class="t" style="left:37.0px;top:279.4px;font-size:9.2px;line-height:12px;letter-spacing:0.050px;color:#5a76b4;background:#dce8f9;padding:0 2px;margin-left:-2px">Сообщение</div>
<div class="t" style="left:36.8px;top:565.6px;font-size:9.2px;line-height:12px;letter-spacing:0.215px;color:#5a76b4;background:#dce8f9;padding:0 2px;margin-left:-2px">Клавиатура</div>
<div class="t" style="left:428.6px;top:559.8px;font-size:9.2px;line-height:12px;letter-spacing:0.011px;color:#5a76b4;background:#dce8f9;padding:0 2px;margin-left:-2px">Разное</div>
<div class="t" style="left:428.3px;top:624.0px;font-size:9.2px;line-height:12px;letter-spacing:0.108px;color:#5a76b4;background:#dce8f9;padding:0 2px;margin-left:-2px">Вложить файлы</div>
<div class="t" style="left:461.0px;top:296.1px;font-size:10.6px;line-height:13px;letter-spacing:0.121px;color:#222;">[<a>Смайлики</a>]</div>
<div class="t" style="left:521.2px;top:296.1px;font-size:10.6px;line-height:13px;letter-spacing:0.222px;color:#222;">[<a>Теги форума</a>]</div>
<div class="t" style="left:38.0px;top:313.8px;font-size:11px;line-height:14px;letter-spacing:0.291px;color:#222;">Здравствуйте, возникла проблема, не изменяется параметр Уровень</div>
<div class="t" style="left:412.4px;top:313.8px;font-size:11px;line-height:14px;letter-spacing:0.356px;color:#222;"><span style="text-decoration:underline wavy #d33;text-decoration-thickness:1px;text-underline-offset:2px">автонастройки</span></div>
<div class="t" style="left:495.5px;top:313.8px;font-size:11px;line-height:14px;letter-spacing:0.351px;color:#222;">окна получения, не знаю что делать</div>
<div class="t" style="left:35.6px;top:665.5px;font-size:10.8px;line-height:13px;letter-spacing:0.027px;color:#222;">Настройки:</div>
<div class="t" style="left:99.5px;top:665.5px;font-size:10.5px;line-height:13px;letter-spacing:0.060px;color:#222;">Отключена</div>
<div class="t" style="left:446.4px;top:580.3px;font-size:10.5px;line-height:13px;letter-spacing:0.041px;color:#222;">Автоматически подставлять ссылки</div>
<div class="t" style="left:449.4px;top:596.8px;font-size:10.5px;line-height:13px;letter-spacing:0.109px;color:#222;">Отключить смайлики в тексте</div>
<div class="t" style="left:429.0px;top:641.8px;font-size:10.5px;line-height:11px;letter-spacing:0.119px;color:#222;">Разрешенные типы файлов: 7z bmp bz2 dmp doc docx gif gz jpe jpeg</div>
<div class="t" style="left:429.0px;top:653.0px;font-size:10.5px;line-height:11px;letter-spacing:0.260px;color:#222;">jpg log pdf png psd rar txt xls xlsx xml zip</div>
<div class="t" style="left:556.3px;top:668.6px;font-size:10.5px;line-height:13px;letter-spacing:-0.421px;font-weight:bold;color:#fff;">Прикрепить файл</div>
<div class="t" style="left:213.4px;top:717.3px;font-size:10.5px;line-height:13px;letter-spacing:0.014px;color:#fff;">Создать новую тему</div>
<div class="t" style="left:321.0px;top:717.3px;font-size:10.5px;line-height:13px;letter-spacing:-0.004px;color:#fff;">Предварительный просмотр сообщения</div>
<div class="t" style="left:525.4px;top:717.3px;font-size:10.5px;line-height:13px;letter-spacing:-0.007px;color:#fff;">Правописание</div>
<div class="t" style="left:17.8px;top:762.6px;font-size:11px;line-height:13px;letter-spacing:-0.010px;font-weight:bold;color:#fff;text-shadow:1px 1px 0 #4a6aa0;">Дополнительные опции</div>
<svg class="abs" style="left:268px;top:98px" width="11" height="8"><path d="M1 1.5 H10 L5.5 6.5 Z" fill="none" stroke="#6a6a6a" stroke-width="1"/></svg>
</div>
 <div id="sb"><svg class="abs" style="left:3px;top:6px" width="8" height="5"><path d="M0 5 L4 1 L8 5Z" fill="#333"/></svg><div class="abs" style="left:1px;top:64px;width:12px;height:618px;background:#c1c1c1"></div></div>
</div>
<div id="task">
 <svg class="abs" style="left:12px;top:9px" width="17" height="17"><path d="M0 2.3 L7 1.3 V8 H0 Z M8 1.1 L17 0 V8 H8 Z M0 9 H7 V15.7 L0 14.7 Z M8 9 H17 V17 L8 15.9 Z" fill="#fff"/></svg>
 <svg class="abs" style="left:54px;top:9px" width="20" height="17"><path d="M0.5 2 H7 L9 4 H19.5 V16.5 H0.5 Z" fill="#f4c95d"/><path d="M0.5 5 H19.5 V16.5 H0.5Z" fill="#fbe08a"/><rect x="5" y="10" width="10" height="6.5" fill="#2b8fd6"/><rect x="7" y="12" width="6" height="2" fill="#fbe08a"/></svg>
 <svg class="abs" style="left:97px;top:8px" width="20" height="19"><rect x="2" y="12" width="15" height="7" fill="#3b6db0"/><rect x="5" y="14" width="8" height="4" fill="#dde"/><rect x="6" y="1" width="13" height="12" fill="#112"/><path d="M0 2 H7 V9 H3 V6 H0 Z" fill="#f2c94c"/><path d="M11 5 L14 7 L11 9" stroke="#fff" stroke-width="1" fill="none"/></svg>
 <svg class="abs" style="left:138px;top:8px" width="21" height="20"><path d="M10.5 3 A7 7 0 1 0 17 12 H6.5 A4 4 0 0 1 14 8.5 H17.5 A7 7 0 0 0 10.5 3 Z" fill="#37b5f0"/><path d="M6.5 12 H17" stroke="#1e88d0" stroke-width="1"/><path d="M2 17 Q-1 12 8 6 Q17 0 20 2 Q21 5 16 9" stroke="#f5c211" stroke-width="1.6" fill="none"/></svg>
 <svg class="abs" style="left:180px;top:8px" width="20" height="20"><circle cx="10" cy="10" r="9.5" fill="#1ed760"/><path d="M4.5 7.3 Q10 5 15.5 8 M5 10.3 Q10 8.5 14.5 11 M5.5 13.2 Q10 12 14 14" stroke="#111" stroke-width="1.7" fill="none" stroke-linecap="round"/></svg>
 <div class="abs" style="left:213px;top:2px;width:40px;height:33px;background:#4c4e52;border:1px solid #66686c;border-bottom:none"></div>
 <div class="abs" style="left:223px;top:12px;width:18px;height:12px;background:#000;border-top:2px solid #e8e8e8"><svg width="18" height="10" style="position:absolute;left:0;top:0"><path d="M2 2.5 H4 M2 2.5 V4.5 H4 M6 2 L8 5 M10 5 H15" stroke="#ddd" stroke-width="1" fill="none"/></svg></div>
 <div class="abs" style="left:255px;top:2px;width:36px;height:33px;background:#4c4e52;border:1px solid #66686c;border-bottom:none"></div>
 <div class="abs" style="left:291px;top:3px;width:3px;height:32px;background:#46484c;border-right:1px solid #66686c"></div>
 <div class="abs" style="left:263px;top:8px;width:19px;height:19px;border-radius:50%;background:conic-gradient(from -60deg,#ea4335 0deg 120deg,#fbbc04 120deg 240deg,#34a853 240deg 360deg)"></div>
 <div class="abs" style="left:268px;top:13px;width:9px;height:9px;border-radius:50%;background:#fff"></div>
 <div class="abs" style="left:269.5px;top:14.5px;width:6px;height:6px;border-radius:50%;background:#4285f4"></div>
 <svg class="abs" style="left:1454px;top:15px" width="10" height="6"><path d="M1 5 L5 1 L9 5Z" fill="#e8e8e8"/></svg>
 <svg class="abs" style="left:1473px;top:11px" width="16" height="14"><path d="M1 5 H4 L8 1.5 V12.5 L4 9 H1 Z" fill="none" stroke="#e8e8e8" stroke-width="1.1"/><path d="M10 4.5 Q11.5 7 10 9.5 M12 3 Q14.5 7 12 11 M14 1.5 Q17 7 14 12.5" stroke="#e8e8e8" stroke-width="1.1" fill="none"/></svg>
 <svg class="abs" style="left:1493px;top:11px" width="16" height="14"><rect x="4.5" y="1.5" width="11" height="8" fill="none" stroke="#e8e8e8" stroke-width="1.1"/><rect x="0.5" y="3.5" width="5" height="4" fill="#2a2c30" stroke="#e8e8e8" stroke-width="1.1"/><path d="M10 9.5 V12.5 M6 12.5 H14" stroke="#e8e8e8" stroke-width="1.1"/></svg>
 
 
 <svg class="abs" style="left:1608px;top:10px" width="26" height="22"><path d="M1.5 1.5 H14.5 V11.5 H8 L5 14.5 V11.5 H1.5 Z" fill="#f0f0f0"/><path d="M4 4.5 H12 M4 7 H12 M4 9.2 H10" stroke="#2a2c30" stroke-width="1"/><circle cx="15.5" cy="13.5" r="6.5" fill="#2a2c30" stroke="#cfcfcf" stroke-width="1.1"/><text x="15.5" y="17" font-family="Liberation Sans" font-weight="bold" font-size="9" fill="#fff" text-anchor="middle">4</text></svg>
</div>
<div id="stext"><div class="t" style="left:21.7px;top:36.7px;font-size:10.3px;line-height:13px;letter-spacing:-0.306px;color:#fff;text-shadow:0 0 2px rgba(0,0,0,.9),1px 1px 1px rgba(0,0,0,.8);">Этот</div>
<div class="t" style="left:5.6px;top:50.0px;font-size:10.3px;line-height:13px;letter-spacing:0.285px;color:#fff;text-shadow:0 0 2px rgba(0,0,0,.9),1px 1px 1px rgba(0,0,0,.8);">компьютер</div>
<div class="t" style="left:81.0px;top:36.3px;font-size:10.3px;line-height:13px;letter-spacing:0.016px;color:#fff;text-shadow:0 0 2px rgba(0,0,0,.9),1px 1px 1px rgba(0,0,0,.8);">Discord</div>
<div class="t" style="left:13.0px;top:106.3px;font-size:10.3px;line-height:13px;letter-spacing:0.128px;color:#fff;text-shadow:0 0 2px rgba(0,0,0,.9),1px 1px 1px rgba(0,0,0,.8);">Корзина</div>
<div class="t" style="left:19.0px;top:177.3px;font-size:10.3px;line-height:13px;letter-spacing:-0.366px;color:#fff;text-shadow:0 0 2px rgba(0,0,0,.9),1px 1px 1px rgba(0,0,0,.8);">Steam</div>
<div class="t" style="left:15.5px;top:247.3px;font-size:10.3px;line-height:13px;letter-spacing:0.156px;color:#fff;text-shadow:0 0 2px rgba(0,0,0,.9),1px 1px 1px rgba(0,0,0,.8);">Google</div>
<div class="t" style="left:14.0px;top:260.3px;font-size:10.3px;line-height:13px;letter-spacing:0.195px;color:#fff;text-shadow:0 0 2px rgba(0,0,0,.9),1px 1px 1px rgba(0,0,0,.8);">Chrome</div>
<div class="t" style="left:13.0px;top:317.3px;font-size:10.3px;line-height:13px;letter-spacing:-0.067px;color:#fff;text-shadow:0 0 2px rgba(0,0,0,.9),1px 1px 1px rgba(0,0,0,.8);">AnyDesk</div>
<div class="t" style="left:23.6px;top:388.3px;font-size:10.3px;line-height:13px;letter-spacing:0.394px;color:#fff;text-shadow:0 0 2px rgba(0,0,0,.9),1px 1px 1px rgba(0,0,0,.8);">Nox</div>
<div class="t" style="left:6.6px;top:458.3px;font-size:10.3px;line-height:13px;letter-spacing:0.424px;color:#fff;text-shadow:0 0 2px rgba(0,0,0,.9),1px 1px 1px rgba(0,0,0,.8);">Multi-Driv</div>
<div class="t" style="left:16.6px;top:530.3px;font-size:10.3px;line-height:13px;letter-spacing:0.401px;color:#fff;text-shadow:0 0 2px rgba(0,0,0,.9),1px 1px 1px rgba(0,0,0,.8);">Новый</div>
<div class="t" style="left:3.0px;top:541.8px;font-size:10.3px;line-height:13px;letter-spacing:0.214px;color:#fff;text-shadow:0 0 2px rgba(0,0,0,.9),1px 1px 1px rgba(0,0,0,.8);">текстовый...</div>
<div class="t" style="left:12.7px;top:600.3px;font-size:10.3px;line-height:13px;letter-spacing:0.100px;color:#fff;text-shadow:0 0 2px rgba(0,0,0,.9),1px 1px 1px rgba(0,0,0,.8);">pgedit.txt</div>
<div class="t" style="left:15.4px;top:670.3px;font-size:10.3px;line-height:13px;letter-spacing:0.576px;color:#fff;text-shadow:0 0 2px rgba(0,0,0,.9),1px 1px 1px rgba(0,0,0,.8);">Новый</div>
<div class="t" style="left:10.2px;top:683.3px;font-size:10.3px;line-height:13px;letter-spacing:-0.032px;color:#fff;text-shadow:0 0 2px rgba(0,0,0,.9),1px 1px 1px rgba(0,0,0,.8);">текстов...</div>
<div class="t" style="left:6.4px;top:740.3px;font-size:10.3px;line-height:13px;letter-spacing:0.289px;color:#fff;text-shadow:0 0 2px rgba(0,0,0,.9),1px 1px 1px rgba(0,0,0,.8);">VimeWorld</div>
<div class="t" style="left:2.6px;top:753.1px;font-size:10.3px;line-height:13px;letter-spacing:-0.217px;color:#fff;text-shadow:0 0 2px rgba(0,0,0,.9),1px 1px 1px rgba(0,0,0,.8);">16-04-2021 ...</div>
<div class="t" style="left:6.4px;top:811.1px;font-size:10.3px;line-height:13px;letter-spacing:0.289px;color:#fff;text-shadow:0 0 2px rgba(0,0,0,.9),1px 1px 1px rgba(0,0,0,.8);">VimeWorld</div>
<div class="t" style="left:2.6px;top:823.9px;font-size:10.3px;line-height:13px;letter-spacing:-0.217px;color:#fff;text-shadow:0 0 2px rgba(0,0,0,.9),1px 1px 1px rgba(0,0,0,.8);">17-04-2021 ...</div>
<div class="t" style="left:2.0px;top:882.1px;font-size:10.3px;line-height:13px;letter-spacing:0.127px;color:#fff;text-shadow:0 0 2px rgba(0,0,0,.9),1px 1px 1px rgba(0,0,0,.8);">ый документ</div>
<div class="t" style="left:341.0px;top:740.3px;font-size:10.3px;line-height:13px;letter-spacing:0.701px;color:#fff;text-shadow:0 0 2px rgba(0,0,0,.9),1px 1px 1px rgba(0,0,0,.8);">Новый</div>
<div class="t" style="left:336.6px;top:753.3px;font-size:10.3px;line-height:13px;letter-spacing:-0.043px;color:#fff;text-shadow:0 0 2px rgba(0,0,0,.9),1px 1px 1px rgba(0,0,0,.8);">текстов...</div>
<div class="t" style="left:393.6px;top:601.0px;font-size:10.3px;line-height:13px;letter-spacing:-0.340px;color:#fff;text-shadow:0 0 2px rgba(0,0,0,.9),1px 1px 1px rgba(0,0,0,.8);">35ac4b2ea6...</div>
<div class="t" style="left:1517.5px;top:903.3px;font-size:10.3px;line-height:13px;letter-spacing:-1.062px;color:#f0f0f0;">РУС</div>
<div class="t" style="left:1560.8px;top:895.3px;font-size:10.3px;line-height:13px;letter-spacing:0.051px;color:#f0f0f0;">2:08</div>
<div class="t" style="left:1548.0px;top:911.8px;font-size:10.3px;line-height:13px;letter-spacing:-0.505px;color:#f0f0f0;">19.04.2021</div>
<div class="t" style="left:78.8px;top:68.8px;font-size:10.3px;line-height:13px;letter-spacing:-0.037px;color:#9a9a9a;">Администратор: Командная строка</div>
<div class="t" style="left:969.7px;top:44.8px;font-size:12px;line-height:14px;letter-spacing:-0.034px;color:#5f6368;">Не защищено</div>
<div class="t" style="left:1061.8px;top:44.8px;font-size:12px;line-height:14px;letter-spacing:0.125px;color:#202124;">forum.oszone.net/newthread.php?do=newthread&amp;f=118</div>
<div class="t" style="left:852.6px;top:73.2px;font-size:10.5px;line-height:13px;letter-spacing:-0.219px;color:#3c4043;">Сервисы</div>
<div class="t" style="left:929.4px;top:73.2px;font-size:10.5px;line-height:13px;letter-spacing:-0.230px;color:#3c4043;">Gmail</div>
<div class="t" style="left:990.0px;top:73.2px;font-size:10.5px;line-height:13px;letter-spacing:-0.178px;color:#3c4043;">YouTube</div>
<div class="t" style="left:1064.3px;top:73.2px;font-size:10.5px;line-height:13px;letter-spacing:-0.275px;color:#3c4043;">Перевести</div>
<div class="t" style="left:1149.5px;top:73.2px;font-size:10.5px;line-height:13px;letter-spacing:-0.230px;color:#3c4043;">Карты</div>
<div class="t" style="left:1211.9px;top:73.2px;font-size:10.5px;line-height:13px;letter-spacing:0.108px;color:#3c4043;">Google</div>
<div class="t" style="left:1280.4px;top:73.2px;font-size:10.5px;line-height:13px;letter-spacing:-0.842px;color:#3c4043;">SASUKEY 10K</div>
<div class="t" style="left:1377.0px;top:73.2px;font-size:10.5px;line-height:13px;letter-spacing:-0.074px;color:#3c4043;">Windows 10 Optimi...</div><div style="position:absolute;top:15px;font-size:10.8px;line-height:14px;color:#1b3658;white-space:nowrap;overflow:hidden;-webkit-mask-image:linear-gradient(90deg,#000 70%,transparent 100%);left:857.6px;width:62px;color:#1b3658">SoundCloud – Listen</div><div style="position:absolute;top:15px;font-size:10.8px;line-height:14px;color:#1b3658;white-space:nowrap;overflow:hidden;-webkit-mask-image:linear-gradient(90deg,#000 70%,transparent 100%);left:976px;width:62px;color:#1b3658">Аниме Чёрный клевер</div><div style="position:absolute;top:15px;font-size:10.8px;line-height:14px;color:#1b3658;white-space:nowrap;overflow:hidden;-webkit-mask-image:linear-gradient(90deg,#000 70%,transparent 100%);left:1095px;width:62px;color:#1b3658">TCP/IP Receive Window</div><div style="position:absolute;top:15px;font-size:10.8px;line-height:14px;color:#1b3658;white-space:nowrap;overflow:hidden;-webkit-mask-image:linear-gradient(90deg,#000 70%,transparent 100%);left:1213px;width:62px;color:#1b3658">Изменение параметров</div><div style="position:absolute;top:15px;font-size:10.8px;line-height:14px;color:#1b3658;white-space:nowrap;overflow:hidden;-webkit-mask-image:linear-gradient(90deg,#000 70%,transparent 100%);left:1332px;width:64px;color:#3c4043">Создать новую тему</div></div>
</body></html>
